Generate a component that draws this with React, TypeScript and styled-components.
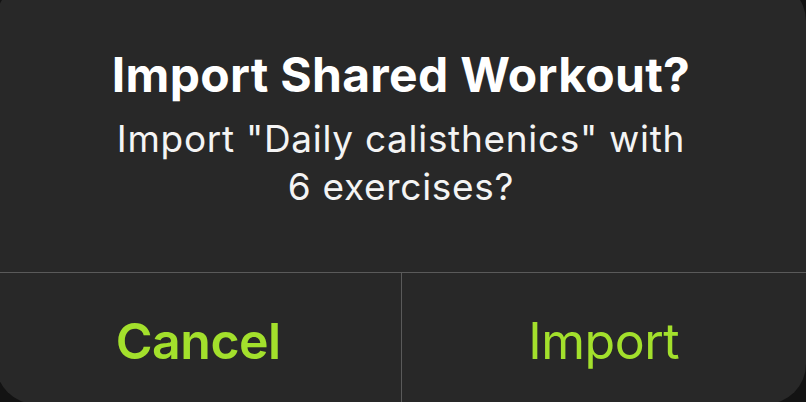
import React from "react";
import styled, { createGlobalStyle } from "styled-components";

const GlobalStyle = createGlobalStyle`
  html, body {
    margin: 0;
    padding: 0;
    background: #131313;
    overflow: hidden;
  }
  body {
    width: 806px;
    height: 402px;
    font-family: Inter, "Liberation Sans", Arial, sans-serif;
  }
`;

const Dialog = styled.div`
  width: 810px;
  height: 423px;
  margin-top: -19px;
  margin-left: -4px;
  background: #282828;
  border-radius: 40px;
  display: flex;
  flex-direction: column;
  overflow: hidden;
`;

const Content = styled.div`
  display: flex;
  flex-direction: column;
  align-items: center;
  text-align: center;
  padding: 66px 30px 0;
  height: 291px;
  box-sizing: border-box;
`;

const Title = styled.h1`
  margin: 0;
  font-size: 48px;
  line-height: 56px;
  font-weight: 700;
  color: #ffffff;
  letter-spacing: 0.3px;
  white-space: nowrap;
`;

const Message = styled.p`
  margin: 12px 0 0;
  font-size: 37px;
  line-height: 48px;
  font-weight: 400;
  color: #f4f4f4;
  letter-spacing: 0.7px;
  white-space: nowrap;
`;

const Divider = styled.div`
  height: 1px;
  background: #5a5a5a;
  flex-shrink: 0;
`;

const Actions = styled.div`
  flex: 1;
  display: grid;
  grid-template-columns: 1fr 1px 1fr;
`;

const VDivider = styled.div`
  background: #5a5a5a;
`;

const ActionButton = styled.button<{ $primary?: boolean }>`
  border: none;
  background: transparent;
  margin: 0;
  display: flex;
  align-items: flex-start;
  justify-content: center;
  padding: 38px 0 0;
  font-family: Inter, "Liberation Sans", Arial, sans-serif;
  font-size: 50px;
  line-height: 60px;
  font-weight: ${(p) => (p.$primary ? 600 : 400)};
  color: #a3e02c;
  letter-spacing: -0.5px;
  cursor: pointer;
`;

export default function App() {
  return (
    <>
      <GlobalStyle />
      <Dialog>
        <Content>
          <Title>Import Shared Workout?</Title>
          <Message>
            Import "Daily calisthenics" with
            <br />6 exercises?
          </Message>
        </Content>
        <Divider />
        <Actions>
          <ActionButton $primary>Cancel</ActionButton>
          <VDivider />
          <ActionButton>Import</ActionButton>
        </Actions>
      </Dialog>
    </>
  );
}
